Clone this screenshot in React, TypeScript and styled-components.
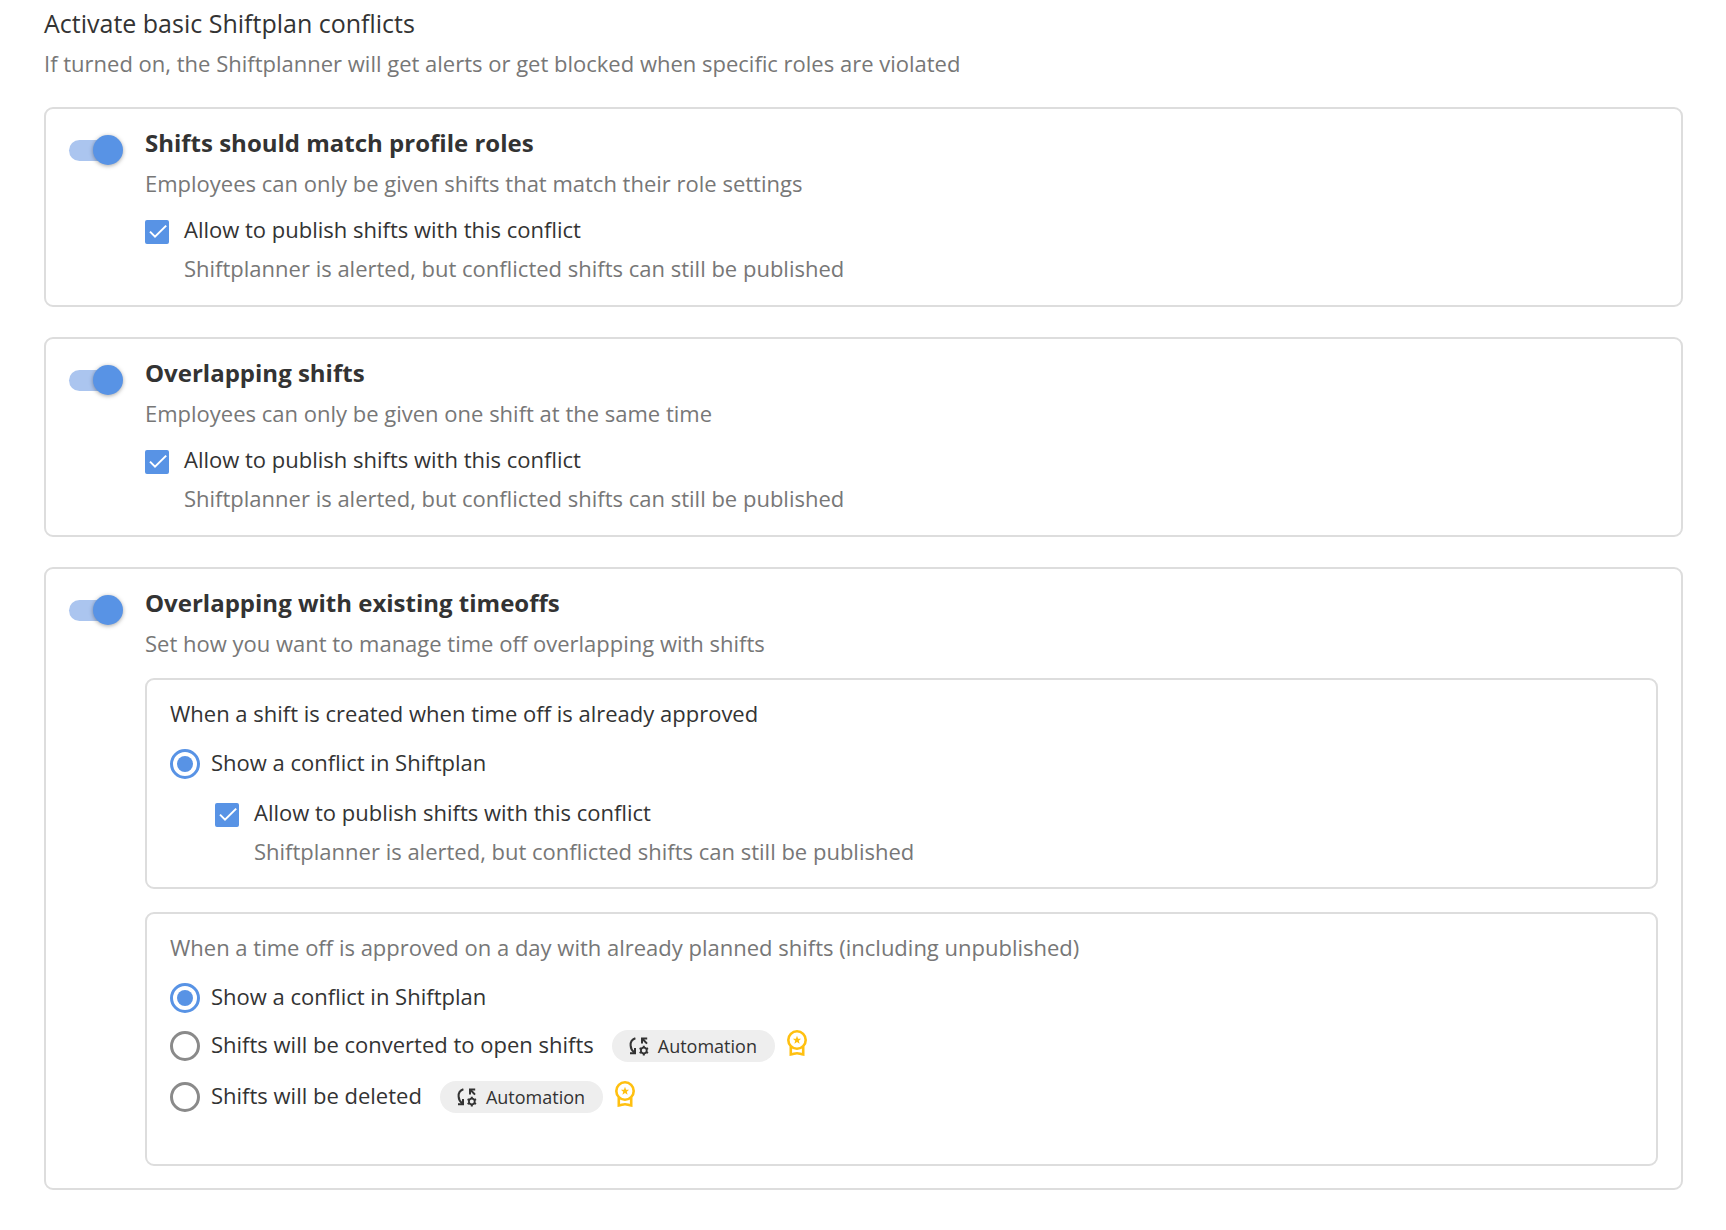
import React, { useId, useState } from "react";
import styled, { createGlobalStyle, css } from "styled-components";

const color = {
  text: "#333333",
  muted: "#777777",
  line: "#dddddd",
  blue: "#5893e5",
  blueSoft: "#abc5ef",
  ring: "#8a8a8a",
  pill: "#eeeeee",
  gold: "#ffc010",
};

const GlobalStyle = createGlobalStyle`
  *, *::before, *::after { box-sizing: border-box; }
  body {
    margin: 0;
    background: #ffffff;
    color: ${color.text};
    font-family: "Open Sans", "Noto Sans", sans-serif;
    font-size: 22px;
    line-height: 30px;
  }
`;

const Page = styled.main`
  padding: 8px 43px 39px 44px;
`;

const Header = styled.header`
  display: flex;
  flex-direction: column;
  gap: 10px;
  margin-bottom: 29px;
`;

const PageTitle = styled.h1`
  margin: 0;
  font-size: 25px;
  font-weight: 400;
  line-height: 30px;
`;

const Text = styled.p<{ $muted?: boolean }>`
  margin: 0;
  color: ${(p) => (p.$muted ? color.muted : color.text)};
`;

const CardList = styled.div`
  display: flex;
  flex-direction: column;
  gap: 30px;
`;

const frame = css`
  border: 2px solid ${color.line};
  border-radius: 9px;
`;

const CardFrame = styled.section`
  ${frame}
  display: grid;
  grid-template-columns: auto minmax(0, 1fr);
  align-items: start;
  column-gap: 22px;
  padding: 19px 23px 22px;
`;

const CardHead = styled.div`
  display: flex;
  flex-direction: column;
  gap: 10px;
`;

const CardTitle = styled.h2`
  margin: 0;
  font-size: 24px;
  font-weight: 700;
  line-height: 30px;
`;

const CardContent = styled.div<{ $gap: number }>`
  display: flex;
  flex-direction: column;
  gap: ${(p) => p.$gap}px;
`;

const Switch = styled.input`
  appearance: none;
  display: grid;
  align-items: center;
  width: 54px;
  height: 30px;
  margin: 7px 0 0;
  cursor: pointer;

  &::before,
  &::after {
    content: "";
    grid-area: 1 / 1;
  }

  &::before {
    width: 50px;
    height: 21px;
    border-radius: 11px;
    background: ${color.line};
  }

  &::after {
    width: 30px;
    height: 30px;
    border-radius: 50%;
    background: ${color.ring};
    box-shadow: 0 1px 4px rgba(0, 0, 0, 0.35);
  }

  &:checked::before {
    background: ${color.blueSoft};
  }

  &:checked::after {
    justify-self: end;
    background: ${color.blue};
  }
`;

const CheckRow = styled.div<{ $nested?: boolean }>`
  display: grid;
  grid-template-columns: 24px minmax(0, 1fr);
  align-items: end;
  gap: 9px 15px;
  margin: ${(p) => (p.$nested ? "2px 0 0 45px" : "0")};
`;

const CheckHint = styled(Text)`
  grid-column: 2;
`;

const CheckCell = styled.span`
  display: grid;
  width: 24px;
  height: 24px;
`;

const CheckInput = styled.input`
  appearance: none;
  grid-area: 1 / 1;
  width: 24px;
  height: 24px;
  margin: 0;
  border: 3px solid ${color.ring};
  border-radius: 2px;
  cursor: pointer;

  &:checked {
    border-color: ${color.blue};
    background: ${color.blue};
  }
`;

const CheckMark = styled.svg`
  grid-area: 1 / 1;
  pointer-events: none;
`;

const SubPanels = styled.div`
  display: flex;
  flex-direction: column;
  gap: 23px;
`;

const SubPanel = styled.div<{ $spacious?: boolean }>`
  ${frame}
  display: flex;
  flex-direction: column;
  padding: 18px 23px ${(p) => (p.$spacious ? 49 : 21)}px;
`;

const RadioList = styled.div`
  display: flex;
  flex-direction: column;
  gap: 16px;
  margin: 19px 0 0;
`;

const RadioRow = styled.div`
  display: flex;
  align-items: flex-start;
`;

const RadioInput = styled.input`
  appearance: none;
  display: grid;
  place-items: center;
  flex: none;
  width: 30px;
  height: 30px;
  margin: 2px 11px 0 0;
  border: 3px solid ${color.ring};
  border-radius: 50%;
  cursor: pointer;

  &:checked {
    border-color: ${color.blue};
  }

  &:checked::after {
    content: "";
    width: 16px;
    height: 16px;
    border-radius: 50%;
    background: ${color.blue};
  }
`;

const Extras = styled.div`
  display: flex;
  align-items: flex-start;
  gap: 12px;
  padding: 1px 0 2px;
  margin-left: 18px;
`;

const Pill = styled.span`
  display: flex;
  align-items: center;
  gap: 9px;
  height: 32px;
  padding: 0 18px 0 17px;
  border-radius: 16px;
  background: ${color.pill};
  font-size: 18px;
`;

function AutomationIcon() {
  return (
    <svg width="20" height="20" viewBox="0 0 20 20" fill="none" stroke={color.text} aria-hidden="true">
      <path d="M6.4 2.2C3.4 3.2 1.4 6.2 1.6 9.4C1.7 12 3 14.6 5.2 16.4" strokeWidth="2" />
      <path d="M1 17.2H6V12" strokeWidth="2" />
      <path d="M13 7.4V2.4H18.2" strokeWidth="2" />
      <path d="M13.4 2.8L18 7.6" strokeWidth="2" />
      <circle cx="14.8" cy="14.6" r="2.9" strokeWidth="1.8" />
      <path
        d="M14.8 9.8V11.6M14.8 17.6V19.4M10.6 12.2L12.2 13.1M17.4 16.1L19 17M10.6 17L12.2 16.1M17.4 13.1L19 12.2"
        strokeWidth="2"
      />
    </svg>
  );
}

function MedalIcon() {
  return (
    <svg width="20" height="26" viewBox="0 0 20 26" fill="none" stroke={color.gold} role="img" aria-label="Premium">
      <circle cx="10" cy="10" r="8.7" strokeWidth="2.6" />
      <path d="M3.8 16.5V24.5C6 24.3 8 23.2 10 23.2C12 23.2 14 24.3 16.2 24.5V16.5" strokeWidth="2.6" />
      <path
        d="M10 5.8L11.1 8.7L14.1 8.8L11.8 10.7L12.6 13.7L10 12L7.4 13.7L8.2 10.7L5.9 8.8L8.9 8.7Z"
        fill={color.gold}
        stroke="none"
      />
    </svg>
  );
}

function PublishOption({ nested }: { nested?: boolean }) {
  const id = useId();
  const [checked, setChecked] = useState(true);
  return (
    <CheckRow $nested={nested}>
      <CheckCell>
        <CheckInput
          id={id}
          type="checkbox"
          checked={checked}
          aria-describedby={`${id}-hint`}
          onChange={(e) => setChecked(e.target.checked)}
        />
        {checked && (
          <CheckMark width="24" height="24" viewBox="0 0 24 24" fill="none" stroke="#ffffff" strokeWidth="2" aria-hidden="true">
            <path d="M5 11.6L10 16.6L21.2 5.6" />
          </CheckMark>
        )}
      </CheckCell>
      <label htmlFor={id}>Allow to publish shifts with this conflict</label>
      <CheckHint id={`${id}-hint`} $muted>
        Shiftplanner is alerted, but conflicted shifts can still be published
      </CheckHint>
    </CheckRow>
  );
}

type Option = { label: string; automation?: boolean };

function RadioOptions({ options, labelledBy, children }: { options: Option[]; labelledBy: string; children?: React.ReactNode }) {
  const name = useId();
  const [selected, setSelected] = useState(0);
  return (
    <RadioList role="radiogroup" aria-labelledby={labelledBy}>
      {options.map((option, i) => (
        <RadioRow key={option.label}>
          <RadioInput
            id={`${name}-${i}`}
            type="radio"
            name={name}
            checked={selected === i}
            onChange={() => setSelected(i)}
          />
          <label htmlFor={`${name}-${i}`}>{option.label}</label>
          {option.automation && (
            <Extras>
              <Pill>
                <AutomationIcon />
                Automation
              </Pill>
              <MedalIcon />
            </Extras>
          )}
        </RadioRow>
      ))}
      {children}
    </RadioList>
  );
}

function ConflictCard({ title, description, gap = 16, children }: { title: string; description: string; gap?: number; children: React.ReactNode }) {
  const id = useId();
  const [on, setOn] = useState(true);
  return (
    <CardFrame>
      <Switch id={id} type="checkbox" role="switch" checked={on} onChange={(e) => setOn(e.target.checked)} />
      <CardContent $gap={gap}>
        <CardHead>
          <CardTitle>
            <label htmlFor={id}>{title}</label>
          </CardTitle>
          <Text $muted>{description}</Text>
        </CardHead>
        {children}
      </CardContent>
    </CardFrame>
  );
}

export default function App() {
  return (
    <>
      <GlobalStyle />
      <Page>
        <Header>
          <PageTitle>Activate basic Shiftplan conflicts</PageTitle>
          <Text $muted>
            If turned on, the Shiftplanner will get alerts or get blocked when specific roles are violated
          </Text>
        </Header>
        <CardList>
          <ConflictCard
            title="Shifts should match profile roles"
            description="Employees can only be given shifts that match their role settings"
          >
            <PublishOption />
          </ConflictCard>
          <ConflictCard
            title="Overlapping shifts"
            description="Employees can only be given one shift at the same time"
          >
            <PublishOption />
          </ConflictCard>
          <ConflictCard
            title="Overlapping with existing timeoffs"
            description="Set how you want to manage time off overlapping with shifts"
            gap={20}
          >
            <SubPanels>
              <SubPanel>
                <Text id="shift-created">When a shift is created when time off is already approved</Text>
                <RadioOptions labelledBy="shift-created" options={[{ label: "Show a conflict in Shiftplan" }]}>
                  <PublishOption nested />
                </RadioOptions>
              </SubPanel>
              <SubPanel $spacious>
                <Text id="timeoff-approved" $muted>
                  When a time off is approved on a day with already planned shifts (including unpublished)
                </Text>
                <RadioOptions
                  labelledBy="timeoff-approved"
                  options={[
                    { label: "Show a conflict in Shiftplan" },
                    { label: "Shifts will be converted to open shifts", automation: true },
                    { label: "Shifts will be deleted", automation: true },
                  ]}
                />
              </SubPanel>
            </SubPanels>
          </ConflictCard>
        </CardList>
      </Page>
    </>
  );
}
